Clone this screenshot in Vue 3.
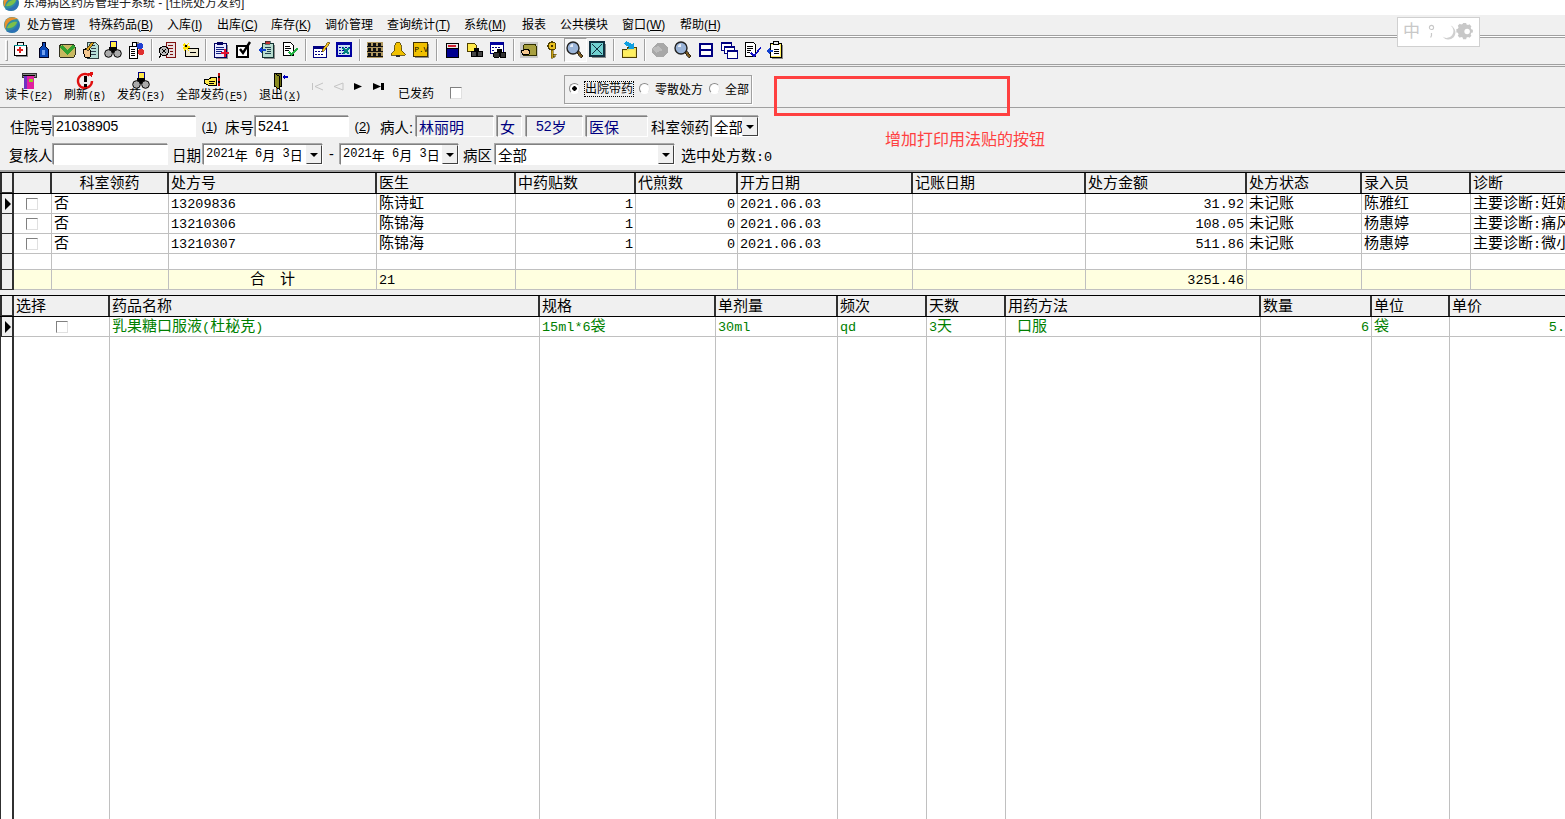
<template>
  <div class="page">
    <div class="title-bar">
      <svg class="title-logo" width="18" height="18" viewBox="0 0 18 18" v-html="logo"></svg>
      <span class="title-text">东海病区药房管理子系统 - [住院处方发药]</span>
    </div>

    <div class="menu-bar">
      <svg width="18" height="18" viewBox="0 0 18 18" v-html="logo"></svg>
      <span v-for="m in menus" :key="m.t" class="menu-item" :style="{ width: m.w + 'px' }">
        {{ m.t }}<template v-if="m.k">(<u>{{ m.k }}</u>)</template>
      </span>
    </div>

    <div class="tool-bar">
      <i class="grip"></i>
      <template v-for="(group, g) in tools" :key="g">
        <i v-if="g > 0" class="tool-sep"></i>
        <span v-for="(icon, n) in group" :key="n" class="tool" :class="{ pressed: g === 6 && n === 2 }">
          <svg width="18" height="18" viewBox="0 0 18 18" shape-rendering="crispEdges" v-html="icon"></svg>
        </span>
      </template>
    </div>

    <div class="action-bar">
      <div v-for="b in actions" :key="b.t" class="action" :style="{ width: b.w + 'px' }">
        <svg width="18" height="18" viewBox="0 0 18 18" shape-rendering="crispEdges" v-html="b.icon"></svg>
        <span>{{ b.t }}<span class="lat">(<u>{{ b.k[0] }}</u>{{ b.k.slice(1) }})</span></span>
      </div>
      <div class="nav">
        <svg width="82" height="12" viewBox="0 0 82 12">
          <path d="M1.500 2v7M12 2 4 5.500l8 3.500" fill="none" stroke="#c4c4c4"/>
          <path d="M32 2 23 5.500l9 3.500z" fill="none" stroke="#c4c4c4"/>
          <path d="M43 2l8 3.500-8 3.500z" fill="#000"/>
          <path d="M62 2l8 3.500-8 3.500zM70 2h3v7h-3z" fill="#000"/>
        </svg>
      </div>
      <span class="sent">已发药</span>
      <i class="check sent-check"></i>
      <div class="radio-group">
        <i class="radio on"></i><span class="focus">出院带药</span>
        <i class="radio"></i><span>零散处方</span>
        <i class="radio"></i><span>全部</span>
      </div>
    </div>

    <div class="form">
      <div class="form-row first">
        <label class="l1">住院号</label><span class="field w143 sans-num">21038905</span>
        <span class="hint">(<u>1</u>)</span>
        <label class="l2">床号</label><span class="field w94 sans-num gap1">5241</span>
        <span class="hint">(<u>2</u>)</span>
        <label class="l3">病人:</label>
        <span class="field info w78">林丽明</span>
        <span class="field info w25 gap3">女</span>
        <span class="field info w57 gap4 pad"><span class="sans-num">52</span>岁</span>
        <span class="field info w62 gap3">医保</span>
        <label class="l4">科室领药</label>
        <span class="field w48 sel">全部<b class="drop"></b></span>
      </div>
      <div class="form-row second">
        <label class="l5">复核人</label><span class="field w115"></span>
        <label class="l6">日期</label>
        <span class="field w120 sel date">
          <span v-for="(p, k) in runs(dateText)" :key="k" :class="{ lat: p.lat }">{{ p.t }}</span><b class="drop"></b>
        </span>
        <span class="dash">-</span>
        <span class="field w119 sel date">
          <span v-for="(p, k) in runs(dateText)" :key="k" :class="{ lat: p.lat }">{{ p.t }}</span><b class="drop"></b>
        </span>
        <label class="l7">病区</label>
        <span class="field w180 sel">全部<b class="drop"></b></span>
        <label class="l8">选中处方数<span class="lat">:0</span></label>
      </div>
    </div>

    <div class="grid grid-a">
      <div class="row head">
        <span class="mark"></span>
        <span v-for="(h, n) in headA" :key="n" class="cell" :class="{ center: n === 1 }">{{ h }}</span>
      </div>
      <div v-for="(r, i) in rowsA" :key="i" class="row body">
        <span class="mark"><i v-if="i === 0" class="arrow"></i></span>
        <span class="cell boxed"><i class="check"></i></span>
        <span v-for="(c, n) in r" :key="n" class="cell" :class="{ right: [3, 4, 7].includes(n) }">
          <span v-for="(p, k) in runs(c)" :key="k" :class="{ lat: p.lat }">{{ p.t }}</span>
        </span>
      </div>
      <div class="row body blank">
        <span class="mark"></span>
        <span v-for="n in 12" :key="n" class="cell"></span>
      </div>
      <div class="row body total">
        <span class="mark"></span>
        <span v-for="(c, n) in totalA" :key="n" class="cell" :class="{ right: n === 8, center: n === 2 }">
          <span v-for="(p, k) in runs(c)" :key="k" :class="{ lat: p.lat }">{{ p.t }}</span>
        </span>
      </div>
    </div>

    <div class="grid grid-b">
      <div class="row head">
        <span class="mark"></span>
        <span v-for="(h, n) in headB" :key="n" class="cell">{{ h }}</span>
      </div>
      <div class="row body green">
        <span class="mark"><i class="arrow"></i></span>
        <span class="cell boxed"><i class="check"></i></span>
        <span v-for="(c, n) in rowB" :key="n" class="cell" :class="{ right: n === 6 || n === 8, indent: n === 5 }">
          <span v-for="(p, k) in runs(c)" :key="k" :class="{ lat: p.lat }">{{ p.t }}</span>
        </span>
      </div>
      <div class="row fill">
        <span class="mark"></span>
        <span v-for="n in 10" :key="n" class="cell"></span>
      </div>
    </div>

    <div class="note-box"></div>
    <div class="note-text">增加打印用法贴的按钮</div>
    <div class="ime">
      <span class="ime-zh">中</span>
      <svg width="58" height="22" viewBox="0 0 58 22">
        <circle cx="6" cy="6" r="2.300" fill="none" stroke="#c8c8c8" stroke-width="1.200"/>
        <path d="M6 12v3l-1 2" fill="none" stroke="#c8c8c8" stroke-width="1.300"/>
        <path d="M27 4a7 7 0 0 1-9 12 8 8 0 0 0 12 1 8 8 0 0 0-3-13z" fill="#d0d0d0"/>
        <path d="M43 3h4l.500 2 2 .8 1.800-1 2.500 2.700-1 1.700.8 2 2 .5v3.600l-2 .5-.8 2 1 1.700-2.500 2.600-1.800-1-2 .8-.5 2h-4l-.5-2-2-.8-1.800 1-2.500-2.600 1-1.700-.8-2-2-.5V11l2-.5.8-2-1-1.700 2.500-2.700 1.800 1 2-.8z" transform="translate(4 -1.500) scale(.85)" fill="#c8c8c8"/>
        <circle cx="45" cy="10.500" r="3" fill="#fff"/>
      </svg>
    </div>
  </div>
</template>

<script setup>
const logo = `
  <circle cx="9" cy="9" r="8" fill="#2f8f9f"/>
  <path d="M3 13C3 7 8 3 15 3 12 1 6 0 3 4 1 7 1 11 3 13z" fill="#e8912c"/>
  <path d="M15 5C15 11 10 15 3 15c3 2 9 3 12-1 2-3 2-7 0-9z" fill="#2d6fb5"/>
  <path d="M4 12c1-4 6-7 10-6-1 4-6 7-10 6z" fill="#7cc04a"/>`

const menus = [
  { t: '处方管理', w: 62 }, { t: '特殊药品', k: 'B', w: 78 }, { t: '入库', k: 'I', w: 50 },
  { t: '出库', k: 'C', w: 54 }, { t: '库存', k: 'K', w: 54 }, { t: '调价管理', w: 62 },
  { t: '查询统计', k: 'T', w: 77 }, { t: '系统', k: 'M', w: 58 }, { t: '报表', w: 38 },
  { t: '公共模块', w: 62 }, { t: '窗口', k: 'W', w: 58 }, { t: '帮助', k: 'H', w: 50 }
]

// 工具栏图标 18x18
const binoculars = `<rect x="6" y="0" width="6" height="6" fill="#ffe94a" stroke="#000080"/>
  <path d="M5 6h8v6H5z" fill="#000"/><circle cx="4.500" cy="12.500" r="3.800" fill="#aaa" stroke="#000" shape-rendering="auto"/>
  <circle cx="13.500" cy="12.500" r="3.800" fill="#aaa" stroke="#000" shape-rendering="auto"/>`
const lens = `<path d="M10 11l2-2 5 6-2 2z" fill="#7a5a20" stroke="#000" stroke-width=".6"/>
  <circle cx="7" cy="7" r="6" fill="#9ab4d8" stroke="#222" stroke-width="1.400" shape-rendering="auto"/>
  <path d="M4 6a3 3 0 0 1 3-3v3z" fill="#e8eef8" shape-rendering="auto"/>`
const shadow = (x, y, w, h) => `<rect x="${x + 2}" y="${y + 2}" width="${w}" height="${h}" fill="#8a8a8a"/>`

const tools = [
  [
    `${shadow(2, 4, 12, 10)}<rect x="2" y="4" width="12" height="10" fill="#fff" stroke="#000"/><path d="M5 1h6v3H5z" fill="none" stroke="#000"/><path d="M7 6h2v2h2v2H9v2H7v-2H5V8h2z" fill="#e02020"/><path d="M2 4h12v1H2z" fill="#009090"/>`,
    `<path d="M7 1h3v4l3 3v8H4V8l3-3z" fill="#0a48b8" stroke="#000020"/><path d="M7 9h3v5H7z" fill="#70a0f0"/>`,
    `<path d="M1 6l2-3h12l2 3v8l-1 2H2l-1-2z" fill="#c8b860" stroke="#303020"/><path d="M1 6l4-2 4 5 6-6 2 3-8 8z" fill="#30a030"/>`,
    `<path d="M6 1h8l3 3v13H6z" fill="#b8e0d8" stroke="#304040"/><path d="M8 4h6M10 7h5M10 10h5M10 13h5" stroke="#304050"/><path d="M2 9l5-2 3 3-1 6H4z" fill="#f5c890" stroke="#000"/><path d="M5 8l6-7 2 1-6 8z" fill="#d8a020" stroke="#000" stroke-width=".6"/>`,
    binoculars,
    `<rect x="2" y="5" width="8" height="12" fill="#fff" stroke="#000"/><path d="M4 8h4M4 10h4M4 12h4M4 14h4" stroke="#000"/><rect x="5" y="1" width="4" height="4" fill="#fff" stroke="#000"/><circle cx="13" cy="5" r="3" fill="#2040d0"/><circle cx="14" cy="11" r="3" fill="#e03030"/><circle cx="11" cy="2" r="1.500" fill="#888"/>`
  ],
  [
    `<rect x="8" y="1" width="9" height="15" fill="#e8e0e0" stroke="#801010"/><path d="M10 4h5M10 7h5M12 10h3M12 13h3" stroke="#801010"/><circle cx="6" cy="10" r="4.500" fill="#bbb" stroke="#000" stroke-width="1.400"/><path d="M3 14l-2 3M4 8l4 4M8 8l-4 4" stroke="#000"/>`,
    `<rect x="4" y="7" width="13" height="8" fill="#f0ead0" stroke="#000"/><path d="M9 11h6" stroke="#000"/><path d="M4 1l1 3 3-2-1 3 4 1-4 1 1 3-3-2-2 3V8L0 7l3-1-1-3z" fill="#ffe000"/><rect x="4" y="4" width="2" height="2" fill="#000"/>`
  ],
  [
    `${shadow(2, 2, 12, 14)}<rect x="2" y="2" width="12" height="14" fill="#e8e8ff" stroke="#000060"/><path d="M5 1h6v3H5z" fill="#000060"/><path d="M4 6h8M4 8h8M4 10h6M4 12h5" stroke="#102080"/><path d="M12 8h2v3h3v2h-3v3h-2v-3H9v-2h3z" fill="#e01030"/>`,
    `<rect x="2" y="5" width="11" height="11" fill="#fff" stroke="#000" stroke-width="2"/><path d="M5 8l3 4 7-11" fill="none" stroke="#000" stroke-width="2.400" shape-rendering="auto"/>`,
    `${shadow(4, 2, 11, 14)}<rect x="4" y="2" width="11" height="14" fill="#b8ddd0" stroke="#103030"/><path d="M7 0h5v3H7z" fill="#c03030" stroke="#103030" stroke-width=".6"/><path d="M7 6h6M9 8h4M9 10h4M7 12h6" stroke="#204050"/><path d="M0 9l4-3v2h4v2H4v2z" fill="#1040d0"/>`,
    `<path d="M2 1h7l3 3v10H2z" fill="#fff" stroke="#000"/><path d="M4 5h5M4 7h6M4 9h4" stroke="#000"/><path d="M7 12l3 3 7-7-1-1-6 5-2-2z" fill="#20b040"/>`
  ],
  [
    `<rect x="1" y="5" width="13" height="11" fill="#fff" stroke="#000080"/><rect x="1" y="5" width="13" height="3" fill="#000080"/><path d="M3 10h2v1H3zm3 0h2v1H6zm3 0h2v1H9zM3 13h2v1H3zm3 0h2v1H6zm3 0h2v1H9z" fill="#000080"/><path d="M10 9l6-8 2 1-6 8-2 1z" fill="#f0c020" stroke="#503000" stroke-width=".6"/>`,
    `<rect x="2" y="2" width="14" height="13" fill="#c8e0f0" stroke="#0000a0" stroke-width="1.500"/><rect x="2" y="2" width="14" height="2" fill="#0000a0"/><path d="M4 6h2v1H4zm3 0h2v1H7zm3 0h2v1h-2zm3 0h2v1h-2zM4 9h2v1H4zm3 0h2v1H7zM4 12h2v1H4zm3 0h2v1H7z" fill="#0000a0"/><path d="M8 7l6 6M14 7l-6 6" stroke="#008080" stroke-width="2"/>`
  ],
  [
    `<path d="M1 1h16v16H1z" fill="#b09860"/><path d="M2 2h3v3H2zm5 0h3v3H7zm5 0h3v3h-3zM2 7h3v3H2zm5 0h3v3H7zm5 0h3v3h-3zM2 12h3v3H2zm5 0h3v3H7zm5 0h3v3h-3zM1 5h16v1H1zM1 10h16v1H1zM1 15h16v1H1z" fill="#111"/>`,
    `<path d="M9 1c2 0 3 1 3 3l1 6 3 3v1H2v-1l3-3 1-6c0-2 1-3 3-3z" fill="#f0c000" stroke="#504000" stroke-width=".8"/><path d="M7 14h4v2H7z" fill="#303030"/>`,
    `${shadow(1, 1, 14, 14)}<rect x="1" y="1" width="14" height="14" fill="#f0c000" stroke="#403000"/><text x="2.500" y="11" font-family="Liberation Mono,monospace" font-size="7.500" fill="#000">P.V</text>`
  ],
  [
    `<path d="M3 4h12v12H3z" fill="#000090" stroke="#000"/><path d="M3 2h12v5H3z" fill="#e8e8e8" stroke="#000"/><path d="M5 4h8v2H5z" fill="#d02030"/>`,
    `<path d="M1 2h7l2 2v6H1z" fill="#ffe94a" stroke="#504000"/><path d="M8 7h5v4H8z" fill="#000"/><circle cx="8" cy="13" r="3" fill="#444" stroke="#000"/><circle cx="14" cy="13" r="3" fill="#444" stroke="#000"/>`,
    `<rect x="1" y="1" width="13" height="11" fill="#fff" stroke="#000080"/><rect x="1" y="1" width="13" height="3" fill="#0000a0"/><path d="M3 6h2v1H3zm3 0h2v1H6zm3 0h2v1H9zM3 9h2v1H3z" fill="#000080"/><path d="M8 8h5v4H8z" fill="#000"/><circle cx="7.500" cy="14" r="3" fill="#333" stroke="#000"/><circle cx="14" cy="14" r="3" fill="#333" stroke="#000"/>`
  ],
  [
    `<rect x="0" y="1" width="18" height="16" fill="#c8c8c8"/><path d="M5 3h10l1 2v9H3V5z" fill="#a8a040" stroke="#303000"/><path d="M1 10l6-2 3 2-1 3-6 1z" fill="#f5c890" stroke="#000"/>`,
    `<circle cx="9" cy="5" r="4" fill="#e8c020" stroke="#504000" stroke-width="1.200"/><circle cx="9" cy="5" r="1.200" fill="#403000"/><path d="M8 9h2v8H8zm2 4h3v1h-3zm0 2h2v1h-2z" fill="#c8a010" stroke="#504000" stroke-width=".5"/>`,
    lens,
    `${shadow(1, 1, 14, 14)}<rect x="1" y="1" width="14" height="14" fill="#70d0d0" stroke="#103040" stroke-width="1.300"/><path d="M3 3l10 10M13 3L3 13" stroke="#103040"/>`
  ],
  [
    `<path d="M2 8h5l1-2h8v10H2z" fill="#f0e060" stroke="#504000"/><path d="M3 10l12-1v6H3z" fill="#fff060"/><path d="M6 0l6 3 2-1v6H8l1-2-5-3z" fill="#10a0e0"/>`
  ],
  [
    `<path d="M6 2h7l4 5v5l-5 4H5L1 12V7z" fill="#a8a8a8"/><path d="M1 7l6-2 5 4-7 3z" fill="#bcbcbc"/>`,
    lens,
    `<rect x="2" y="2" width="14" height="14" fill="#000080"/><path d="M4 4h10v4H4zM4 10h10v4H4z" fill="#fff"/>`,
    `<rect x="1" y="1" width="10" height="8" fill="#fff" stroke="#000080"/><rect x="1" y="1" width="10" height="2" fill="#000080"/><rect x="4" y="5" width="10" height="7" fill="#fff" stroke="#000080"/><rect x="4" y="5" width="10" height="2" fill="#000080"/><rect x="7" y="9" width="10" height="8" fill="#fff" stroke="#000080"/><rect x="7" y="9" width="10" height="2" fill="#000080"/>`,
    `<path d="M2 1h8l2 2v12H2z" fill="#fff" stroke="#000"/><path d="M4 5h6M4 7h6M4 9h4M4 11h3" stroke="#000"/><path d="M7 12l2-1 2 3 6-8 1 1-7 10z" fill="#1010c0"/>`,
    `${shadow(4, 2, 11, 14)}<rect x="4" y="2" width="11" height="14" fill="#ffee60" stroke="#000"/><rect x="5" y="4" width="9" height="11" fill="#fff"/><path d="M7 0h5v3H7z" fill="#e8e8e8" stroke="#000"/><path d="M8 8h5M8 10h5M8 12h5" stroke="#000"/><path d="M0 10l4-3v2h3v2H4v2z" fill="#1040d0"/>`
  ]
]

const actions = [
  {
    t: '读卡', k: 'F2', w: 56,
    icon: `<path d="M2 1h14v4H2z" fill="#888" stroke="#333"/><path d="M3 3h12" stroke="#000"/><path d="M4 4h10v13H4z" fill="#e020a0"/><path d="M4 4h3v13H4z" fill="#7030c0"/><rect x="9" y="7" width="4" height="3" fill="#90d020"/>`
  },
  {
    t: '刷新', k: 'R', w: 56,
    icon: `<path d="M13.500 3.600A7 7 0 1 0 16 9" fill="none" stroke="#e01010" stroke-width="2.400" shape-rendering="auto"/><path d="M11 1l6-1-1 6z" fill="#e01010"/><path d="M8 4h2.500v6H8zM8 12h2.500v2.500H8z" fill="#000"/>`
  },
  { t: '发药', k: 'F3', w: 56, icon: binoculars },
  {
    t: '全部发药', k: 'F5', w: 86,
    icon: `<path d="M1 7h5l3-2h4v8H5l-4-2z" fill="#ffe94a" stroke="#000"/><path d="M6 9h6M6 11h5" stroke="#000"/><path d="M15 1h2v3h-2zM15 6h2v3h-2zM15 11h2v3h-2z" fill="#c01010"/><path d="M15 4h2v2h-2zM15 9h2v2h-2z" fill="#000"/>`
  },
  {
    t: '退出', k: 'X', w: 50,
    icon: `<path d="M3 1h7v13H3z" fill="#6a6a10" stroke="#000"/><path d="M3 1l5 3v13l-5-3z" fill="#8a8a20" stroke="#000"/><path d="M11 5l3-3v2h3v2h-3v2z" fill="#0000c0"/>`
  }
]

const dateText = '2021年 6月 3日'
const headA = ['', '科室领药', '处方号', '医生', '中药贴数', '代煎数', '开方日期', '记账日期', '处方金额', '处方状态', '录入员', '诊断']
const rowsA = [
  ['否', '13209836', '陈诗虹', '1', '0', '2021.06.03', '', '31.92', '未记账', '陈雅红', '主要诊断:妊娠'],
  ['否', '13210306', '陈锦海', '1', '0', '2021.06.03', '', '108.05', '未记账', '杨惠婷', '主要诊断:痛风'],
  ['否', '13210307', '陈锦海', '1', '0', '2021.06.03', '', '511.86', '未记账', '杨惠婷', '主要诊断:微小']
]
const totalA = ['', '', '合　计', '21', '', '', '', '', '3251.46', '', '', '']

const headB = ['选择', '药品名称', '规格', '单剂量', '频次', '天数', '用药方法', '数量', '单位', '单价']
const rowB = ['乳果糖口服液(杜秘克)', '15ml*6袋', '30ml', 'qd', '3天', '口服', '6', '袋', '5.']

// 中英文分开，宋体的西文是半角宽度
function runs(text) {
  return (text.match(/[\x20-\x7e]+|[^\x20-\x7e]+/g) || []).map((t) => ({
    t,
    lat: /^[\x20-\x7e]/.test(t)
  }))
}
</script>

<style>
html,
body {
  margin: 0;
  overflow: hidden;
  background: #fff;
}
</style>

<style scoped>
.page {
  position: relative;
  display: flex;
  flex-direction: column;
  width: 1565px;
  height: 819px;
  overflow: hidden;
  background: #f0f0f0;
  color: #000;
  font-family: "Liberation Sans", "Noto Sans CJK SC", sans-serif;
  font-size: 12px;
}
.lat {
  font-family: "Liberation Mono", monospace;
  font-size: 13.5px;
  white-space: pre;
}

.title-bar {
  display: flex;
  height: 15px;
  overflow: hidden;
  padding-left: 2px;
  background: #fff;
}
.title-logo {
  margin-top: -6px;
  flex: none;
}
.title-text {
  margin: -5px 0 0 3px;
  line-height: 17px;
  color: #222;
  white-space: pre;
}

.menu-bar {
  display: flex;
  align-items: center;
  height: 20px;
  padding-left: 3px;
  white-space: nowrap;
}
.menu-item {
  flex: none;
  line-height: 18px;
}
.menu-item:first-of-type {
  margin-left: 6px;
}

.tool-bar {
  position: relative;
  display: flex;
  align-items: center;
  flex: none;
  height: 30px;
  box-sizing: border-box;
  padding-left: 9.500px;
  border-top: 1px solid #a0a0a0;
  border-bottom: 1px solid #a0a0a0;
}
.tool-bar::before {
  content: "";
  position: absolute;
  left: 0;
  right: 0;
  top: 0;
  height: 1px;
  background: #fff;
  border-bottom: 1px solid #a0a0a0;
}
.grip {
  position: absolute;
  left: 5px;
  top: 4px;
  width: 3px;
  height: 21px;
  border-left: 1px solid #fff;
  border-top: 1px solid #fff;
  border-right: 1px solid #a0a0a0;
  border-bottom: 1px solid #a0a0a0;
  box-sizing: border-box;
}
.tool {
  display: flex;
  align-items: center;
  justify-content: center;
  flex: none;
  width: 23px;
  height: 24px;
  box-sizing: border-box;
  border: 1px solid transparent;
}
.tool.pressed {
  border-color: #a0a0a0 #fff #fff #a0a0a0;
  background: #f7f7f7;
}
.tool-sep {
  flex: none;
  width: 2px;
  height: 22px;
  margin: 0 3px;
  border-left: 1px solid #a0a0a0;
  border-right: 1px solid #fff;
  box-sizing: border-box;
}

.action-bar {
  display: flex;
  align-items: flex-start;
  flex: none;
  height: 42px;
  box-sizing: border-box;
  margin-top: 1px;
  padding: 5px 0 0 1px;
  border-top: 1px solid #a0a0a0;
  border-bottom: 1px solid #a0a0a0;
}
.action {
  display: flex;
  flex-direction: column;
  align-items: center;
  flex: none;
  line-height: 15px;
  white-space: nowrap;
}
.action .lat {
  font-size: 10px;
}
.action svg {
  margin-bottom: -2px;
}
.nav {
  flex: none;
  margin: 9px 0 0 6px;
  width: 82px;
  height: 12px;
}
.sent {
  flex: none;
  margin: 14px 0 0 5px;
  line-height: 16px;
}
.sent-check {
  margin: 15px 0 0 16px;
}
.radio-group {
  display: flex;
  align-items: center;
  flex: none;
  box-sizing: border-box;
  width: 188px;
  height: 29px;
  margin: 3px 0 0 102px;
  padding: 0 0 2px 4px;
  border: 1px solid #a0a0a0;
  box-shadow: 1px 1px 0 #fff;
}
.radio-group span {
  flex: none;
  width: 48px;
  text-align: center;
  white-space: nowrap;
}
.radio-group span:last-child {
  width: 24px;
}
.radio-group .focus {
  outline: 1px dotted #000;
  outline-offset: 0;
  line-height: 14px;
}
.radio {
  flex: none;
  box-sizing: border-box;
  width: 11px;
  height: 11px;
  margin: 0 5px 0 5px;
  border-radius: 50%;
  border: 1px solid #8a8a8a;
  border-color: #8a8a8a #e8e8e8 #fff #8a8a8a;
  background: #fff;
}
.radio.on {
  margin-left: 0;
  background: radial-gradient(circle, #000 0 2px, #fff 2.500px);
}
.radio + span + .radio {
  margin-left: 6px;
}
.check {
  display: block;
  flex: none;
  box-sizing: border-box;
  width: 12px;
  height: 12px;
  border: 1px solid;
  border-color: #808080 #e0e0e0 #e0e0e0 #808080;
  background: #fff;
}

.form {
  flex: none;
  height: 64px;
  font-size: 14.500px;
}
.form-row {
  display: flex;
  align-items: center;
  height: 22px;
  white-space: nowrap;
}
.form-row.first {
  margin-top: 7px;
}
.form-row.second {
  margin-top: 6px;
}
.form-row label {
  flex: none;
}
.l1 { margin-left: 10px; width: 43px; }
.l2 { margin-left: 6px; width: 29px; }
.l3 { margin-left: 8px; width: 36px; }
.l4 { margin-left: 3px; width: 58px; }
.l5 { margin-left: 9px; width: 44px; }
.l6 { margin-left: 4px; width: 31px; }
.l7 { margin-left: 4px; width: 32px; }
.l8 { margin-left: 6px; font-size: 15px; }
.field {
  display: flex;
  align-items: center;
  flex: none;
  box-sizing: border-box;
  height: 21px;
  padding-left: 2px;
  border: 1px solid;
  border-color: #808080 #fff #fff #808080;
  box-shadow: -1px -1px 0 #a8a8a8;
  background: #fff;
  overflow: hidden;
  position: relative;
}
.sans-num {
  font-family: "Liberation Sans", sans-serif;
  font-size: 14px;
}
.info {
  background: #f0f0f0;
  color: #000080;
  font-size: 15px;
}
.gap1 { margin-left: 1px; }
.gap3 { margin-left: 3px; }
.gap4 { margin-left: 4px; }
.pad {
  padding-left: 9px;
}
.hint {
  flex: none;
  width: 19px;
  margin-left: 4px;
  font-size: 13px;
  text-align: center;
}
.w25 { width: 25px; }
.w48 { width: 48px; margin-left: 2px; }
.w57 { width: 57px; }
.w62 { width: 62px; }
.w78 { width: 78px; }
.w94 { width: 94px; }
.w115 { width: 115px; }
.w119 { width: 119px; }
.w120 { width: 120px; }
.w143 { width: 143px; }
.w180 { width: 180px; }
.sel {
  padding-right: 16px;
}
.date {
  font-size: 13px;
}
.date .lat {
  font-size: 12px;
}
.dash {
  flex: none;
  width: 17px;
  text-align: center;
}
.drop {
  position: absolute;
  right: 0;
  top: 0;
  width: 16px;
  height: 19px;
  box-sizing: border-box;
  border: 1px solid;
  border-color: #f0f0f0 #404040 #404040 #f0f0f0;
  background: #f0f0f0;
}
.drop::after {
  content: "";
  position: absolute;
  left: 3px;
  top: 7px;
  border: 4px solid transparent;
  border-top-color: #000;
  border-bottom-width: 0;
}

.grid {
  flex: none;
  font-size: 15px;
  overflow: hidden;
  border-top: 1px solid #000;
}
.grid-a {
  position: relative;
  box-shadow: 0 -2px 0 #a0a0a0;
}
.grid-b {
  flex: 1;
  display: flex;
  flex-direction: column;
  margin-top: 5px;
  background: #fff;
}
.row {
  display: grid;
  grid-auto-flow: column;
}
.grid-a .row {
  grid-template-columns: 14px 38px 117px 208px 139px 120px 102px 175px 173px 161px 115px 109px 120px;
}
.grid-b .row {
  grid-template-columns: 14px 96px 430px 176px 122px 89px 79px 255px 111px 78px 118px;
}
.cell {
  display: block;
  box-sizing: border-box;
  padding: 0 2px;
  white-space: nowrap;
  overflow: hidden;
  border-right: 1px solid #c0c0c0;
  border-bottom: 1px solid #c0c0c0;
  line-height: 18px;
}
.center {
  text-align: center;
}
.right {
  text-align: right;
}
.indent {
  padding-left: 11px;
}
.boxed {
  display: flex;
  align-items: center;
  justify-content: center;
  padding-right: 4px;
}
.grid-b .boxed {
  padding-right: 0;
  padding-left: 0;
}
.mark {
  display: flex;
  align-items: center;
  box-sizing: border-box;
  background: #f0f0f0;
  border-left: 2px solid #303030;
  border-right: 2px solid #303030;
  border-bottom: 1px solid #303030;
}
.arrow {
  margin-left: 3px;
  border: 6px solid transparent;
  border-left-color: #000;
  border-right-width: 0;
}
.head {
  height: 20px;
  background: #f0f0f0;
  border-bottom: 1px solid #000;
  box-sizing: content-box;
}
.head .cell {
  border-right: 2px solid #303030;
  border-bottom: 0;
  line-height: 20px;
}
.body {
  height: 20px;
  background: #fff;
}
.blank {
  height: 16px;
}
.total {
  background: #ffffe0;
}
.green {
  color: #008000;
}
.fill {
  flex: 1;
}
.fill .cell {
  border-bottom: 0;
}
.fill .mark {
  background: #fff;
  border-left-width: 1px;
  border-bottom: 0;
}

.note-box {
  position: absolute;
  left: 774px;
  top: 76px;
  width: 236px;
  height: 40px;
  box-sizing: border-box;
  border: 3px solid #ff4040;
}
.note-text {
  position: absolute;
  left: 885px;
  top: 130px;
  font-size: 16px;
  line-height: 20px;
  color: #ff4040;
}
.ime {
  position: absolute;
  left: 1397px;
  top: 17px;
  display: flex;
  align-items: center;
  box-sizing: border-box;
  width: 83px;
  height: 30px;
  padding-left: 5px;
  background: #fff;
  border: 1px solid #d0d0d0;
}
.ime-zh {
  font-size: 17px;
  line-height: 20px;
  color: #c8c8c8;
  margin-right: 6px;
}
</style>
